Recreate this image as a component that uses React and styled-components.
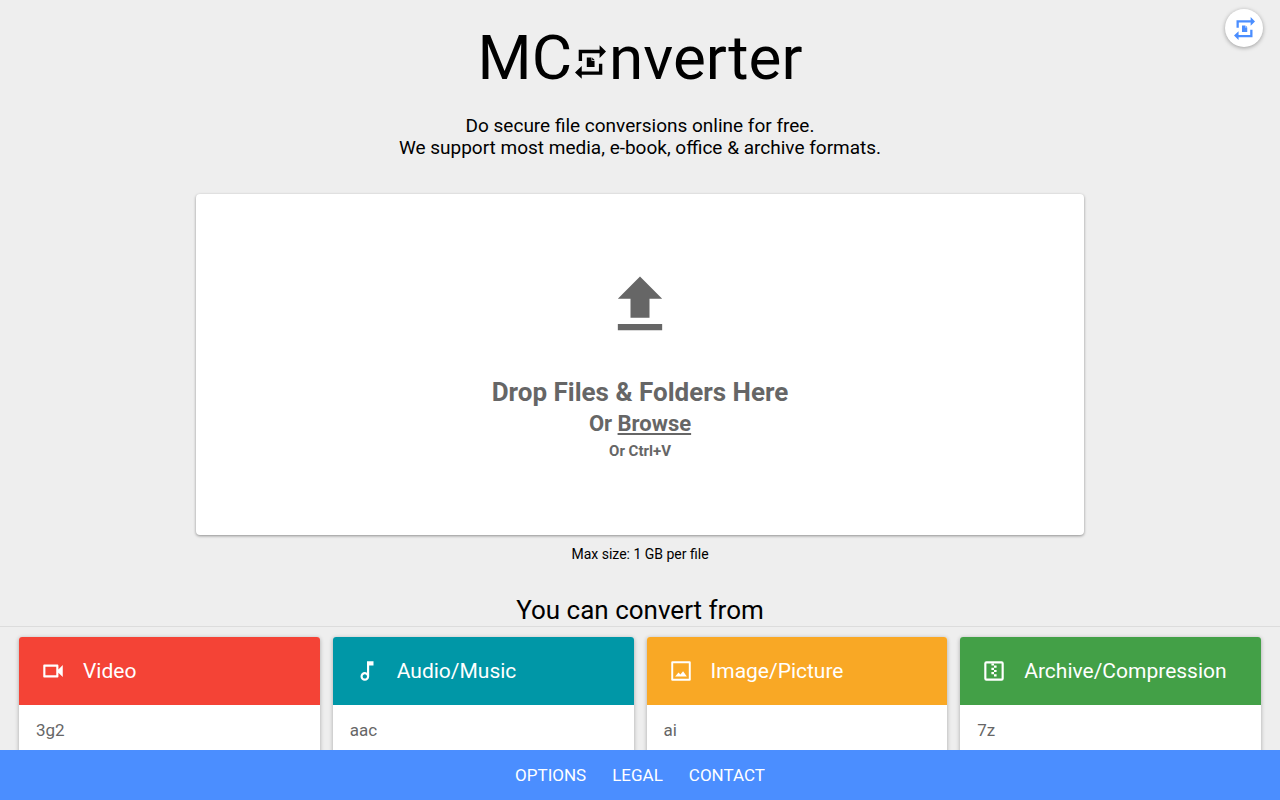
import React from 'react'
import styled, { createGlobalStyle } from 'styled-components'
import { MdOutlineVideocam, MdOutlineAudiotrack } from 'react-icons/md'

const categories = [
    { name: 'Video', color: '#f44336', icon: <MdOutlineVideocam />, formats: ['3g2'] },
    { name: 'Audio/Music', color: '#0097a7', icon: <MdOutlineAudiotrack />, formats: ['aac'] },
    { name: 'Image/Picture', color: '#f9a825', icon: <PictureIcon />, formats: ['ai'] },
    { name: 'Archive/Compression', color: '#43a047', icon: <ArchiveIcon />, formats: ['7z'] },
]

function PictureIcon() {
    return (
        <svg viewBox="0 0 24 24" fill="currentColor" aria-hidden="true">
            <path d="M4 3h16a1 1 0 0 1 1 1v16a1 1 0 0 1-1 1H4a1 1 0 0 1-1-1V4a1 1 0 0 1 1-1zm.8 1.8v14.4h14.4V4.8z" fillRule="evenodd" />
            <path d="M6.6 17l3.1-3.6 1.8 1.9 2.4-3 3.500 4.700z" />
        </svg>
    )
}

function ArchiveIcon() {
    return (
        <svg viewBox="0 0 24 24" fill="currentColor" aria-hidden="true">
            <path d="M5 3h14a2 2 0 0 1 2 2v14a2 2 0 0 1-2 2H5a2 2 0 0 1-2-2V5a2 2 0 0 1 2-2zm0 2v14h14V5z" fillRule="evenodd" />
            <path d="M9.600 5H12v2H9.600zM12 7h2.400v2H12zM9.600 9H12v2H9.600zM12 11h2.400v2H12zM9.600 13H12v2H9.600zM12 15h2.400v2H12z" />
        </svg>
    )
}

const ConvertIcon = () => (
    <svg viewBox="0 0 92 100" fill="currentColor" aria-hidden="true">
        <path d="M11 47V14h62V0l19 19-19 19V24H21v23z" />
        <path d="M81 55v33H20v12L0 81l20-19v16h51V55z" />
        <path d="M35 37h14v9h9v19H35zM51 37l7 7h-7z" />
    </svg>
)

const App = () => {
    return (
        <>
            <GlobalStyle />
            <Page>
                <Header>
                    <Title aria-label="MConverter">
                        MC<ConvertIcon />nverter
                    </Title>
                    <Tagline>
                        Do secure file conversions online for free.<br />
                        We support most media, e-book, office &amp; archive formats.
                    </Tagline>
                </Header>
                <FloatingButton aria-label="Convert">
                    <ConvertIcon />
                </FloatingButton>
                <DropZone>
                    <svg viewBox="0 0 24 24" fill="currentColor" aria-hidden="true">
                        <path d="M9 16h6v-6h4l-7-7-7 7h4zm-4 2h14v2H5z" />
                    </svg>
                    <DropTitle>Drop Files &amp; Folders Here</DropTitle>
                    <DropBrowse>Or <u>Browse</u></DropBrowse>
                    <DropHint>Or Ctrl+V</DropHint>
                </DropZone>
                <MaxSize>Max size: 1 GB per file</MaxSize>
                <SectionTitle>You can convert from</SectionTitle>
                <Cards>
                    {categories.map((category) => (
                        <Card key={category.name}>
                            <CardHeader $color={category.color}>
                                {category.icon}
                                <h3>{category.name}</h3>
                            </CardHeader>
                            <Formats>
                                {category.formats.map((format) => (
                                    <li key={format}><a href={'#' + format}>{format}</a></li>
                                ))}
                            </Formats>
                        </Card>
                    ))}
                </Cards>
            </Page>
            <Footer>
                <button type="button">OPTIONS</button>
                <a href="#legal">LEGAL</a>
                <a href="#contact">CONTACT</a>
            </Footer>
        </>
    )
}

export default App

const GlobalStyle = createGlobalStyle`
*{
    box-sizing: border-box;
}
body{
    margin: 0;
    background: #eeeeee;
    color: #000;
    font-family: Roboto, "Liberation Sans", sans-serif;
}
h1, h2, h3, p, ul{
    margin: 0;
    padding: 0;
    font-weight: 400;
}
button{
    font-family: inherit;
    border: none;
    cursor: pointer;
}
`

const Page = styled.main`
display: flex;
flex-direction: column;
align-items: center;
`

const Header = styled.header`
padding: 20px 16px 35px;
text-align: center;
`

const Title = styled.h1`
font-size: 62px;
line-height: 76px;

svg{
    width: 31px;
    height: 34px;
    margin: 0 3px;
}
`

const Tagline = styled.p`
margin-top: 19px;
font-size: 19px;
line-height: 22px;
`

const FloatingButton = styled.button`
position: fixed;
top: 9px;
right: 17px;
display: flex;
align-items: center;
justify-content: center;
width: 38px;
height: 38px;
padding: 0;
border-radius: 50%;
background: #fff;
color: #4b8eff;
box-shadow: 0 1px 4px rgba(0,0,0,0.35);

svg{
    width: 21px;
    height: 23px;
}
`

const DropZone = styled.button`
display: flex;
flex-direction: column;
align-items: center;
width: calc(100% - 32px);
max-width: 888px;
padding: 73px 16px 72px;
border-radius: 4px;
background: #fff;
color: #666;
font-weight: 700;
box-shadow: 0 1px 3px rgba(0,0,0,0.4);

svg{
    width: 76px;
    height: 76px;
    margin-bottom: 32px;
}
`

const DropTitle = styled.span`
font-size: 26px;
line-height: 34px;
`

const DropBrowse = styled.span`
font-size: 22px;
line-height: 30px;
`

const DropHint = styled.span`
font-size: 15px;
line-height: 24px;
`

const MaxSize = styled.p`
margin-top: 10px;
font-size: 14px;
line-height: 18px;
`

const SectionTitle = styled.h2`
width: 100%;
margin-top: 31px;
border-bottom: 1px solid #dcdcdc;
text-align: center;
font-size: 26px;
line-height: 32px;
`

const Cards = styled.section`
display: grid;
grid-template-columns: repeat(4, 1fr);
gap: 13px;
width: 100%;
padding: 10px 19px 0;
`

const Card = styled.article`
border-radius: 3px;
overflow: hidden;
background: #fff;
box-shadow: 0 1px 4px rgba(0,0,0,0.3);
`

const CardHeader = styled.header`
display: flex;
align-items: center;
gap: 17px;
height: 68px;
padding: 0 21px;
background: ${(props) => props.$color};
color: #fff;

svg{
    flex: none;
    width: 26px;
    height: 26px;
}
h3{
    font-size: 21px;
    line-height: 28px;
}
`

const Formats = styled.ul`
list-style: none;

a{
    display: block;
    padding: 14px 17px;
    color: #666;
    font-size: 17px;
    line-height: 22px;
    text-decoration: none;
}
`

const Footer = styled.footer`
position: fixed;
bottom: 0;
left: 0;
right: 0;
display: flex;
align-items: center;
justify-content: center;
gap: 26px;
height: 50px;
background: #4b8eff;

a, button{
    padding: 0;
    background: none;
    color: #fff;
    font-size: 17px;
    line-height: 20px;
    text-decoration: none;
}
`
